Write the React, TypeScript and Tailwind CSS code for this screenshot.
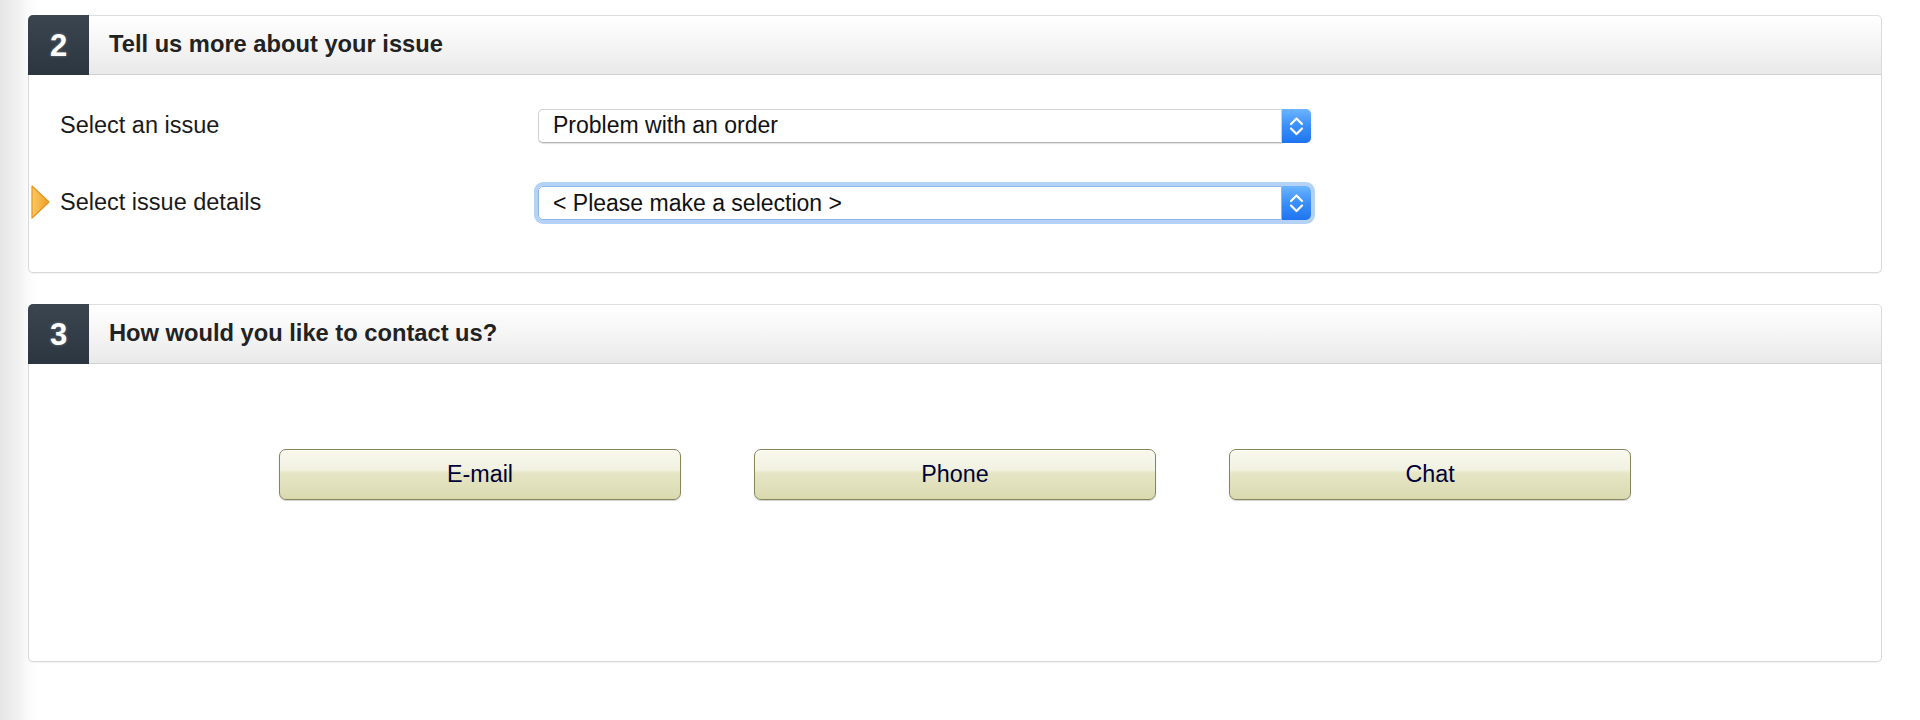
import React from "react";

function SelectBox({ text, focused }: { text: string; focused?: boolean }) {
  return (
    <div
      className={
        "flex h-[34px] w-[773px] rounded-[5px] " +
        (focused ? "shadow-[0_0_0_4px_#b3d2f6]" : "")
      }
    >
      <div
        className={
          "flex flex-1 items-center rounded-l-[5px] border bg-white pl-[14px] text-[23px] text-[#111] " +
          (focused
            ? "border-[#8fb6e8]"
            : "border-[#d2d2d2] border-b-[#b4b4b4] shadow-[0_1px_1px_rgba(0,0,0,0.12)]")
        }
        style={{ fontFamily: '"Liberation Sans", Arial, sans-serif' }}
      >
        {text}
      </div>
      <div className="flex w-[29px] items-center justify-center rounded-r-[5px] bg-[linear-gradient(to_bottom,#6cb4ff,#3a8ffc_50%,#1e74f0)]">
        <svg width="29" height="34" viewBox="0 0 29 34" fill="none">
          <polyline points="9,15 14.5,9.5 20,15" stroke="white" strokeWidth="2.2" strokeLinecap="round" strokeLinejoin="round" />
          <polyline points="9,19.5 14.5,25 20,19.5" stroke="white" strokeWidth="2.2" strokeLinecap="round" strokeLinejoin="round" />
        </svg>
      </div>
    </div>
  );
}

function PanelHeader({ num, title }: { num: string; title: string }) {
  return (
    <div className="flex h-[60px]">
      <div className="flex w-[61px] items-center justify-center rounded-tl-[5px] bg-[linear-gradient(to_bottom,#3a4550,#2c3640)]">
        <span className="text-[31px] font-bold leading-none text-white [text-shadow:0_0_3px_rgba(255,255,255,0.35)]">
          {num}
        </span>
      </div>
      <div className="flex flex-1 items-center rounded-tr-[5px] border-t border-r border-b border-t-[#dedede] border-r-[#dadada] border-b-[#d2d2d2] bg-[linear-gradient(to_bottom,#ffffff,#f6f6f6_45%,#e9e9e9)] pl-[20px]">
        <span className="text-[23.7px] font-bold text-[#222]">{title}</span>
      </div>
    </div>
  );
}

function ContactButton({ label }: { label: string }) {
  return (
    <div className="flex h-[51px] w-[402px] items-center justify-center rounded-[7px] border border-[#86865a] bg-[linear-gradient(to_bottom,#f8f8ee,#f2f2e2_40%,#e6e6c6_47%,#d9d9b0)] text-[23.3px] text-[#000038] shadow-[inset_0_1px_0_#ffffff,0_1px_1px_rgba(0,0,0,0.18)]">
      {label}
    </div>
  );
}

export default function App() {
  return (
    <div
      className="min-h-[720px] w-full bg-[linear-gradient(to_right,#e6e6e6,#f2f2f2_20px,#fbfbfb_28px,#ffffff_40px)] pt-[15px] pr-[38px] pl-[28px]"
      style={{ fontFamily: '"Liberation Sans", Arial, Helvetica, sans-serif' }}
    >
      <div className="flex flex-col gap-[31px]">
        {/* Panel 2 */}
        <div>
          <PanelHeader num="2" title="Tell us more about your issue" />
          <div className="flex h-[198px] flex-col gap-[42px] rounded-b-[5px] border-r border-b border-l border-[#d9d9d9] bg-white pt-[33px] pl-[31px] shadow-[0_1px_1px_rgba(0,0,0,0.05)]">
            <div className="flex items-center">
              <div className="w-[478px] text-[23.5px] text-[#1a1a1a]">Select an issue</div>
              <SelectBox text="Problem with an order" />
            </div>
            <div className="relative flex items-center">
              <svg
                className="absolute top-[0px] left-[-29px]"
                width="19"
                height="34"
                viewBox="0 0 19 34"
              >
                <defs>
                  <linearGradient id="arr" x1="0" y1="0" x2="1" y2="0">
                    <stop offset="0" stopColor="#fac964" />
                    <stop offset="1" stopColor="#ee9d22" />
                  </linearGradient>
                </defs>
                <polygon points="1,1 18,17 1,33" fill="url(#arr)" stroke="#e59420" strokeWidth="1.2" strokeLinejoin="round" />
              </svg>
              <div className="w-[478px] text-[23.5px] text-[#1a1a1a]">Select issue details</div>
              <SelectBox text="< Please make a selection >" focused />
            </div>
          </div>
        </div>

        {/* Panel 3 */}
        <div>
          <PanelHeader num="3" title="How would you like to contact us?" />
          <div className="flex h-[298px] justify-center gap-[73px] rounded-b-[5px] border-r border-b border-l border-[#d9d9d9] bg-white pt-[85px] shadow-[0_1px_1px_rgba(0,0,0,0.05)]">
            <ContactButton label="E-mail" />
            <ContactButton label="Phone" />
            <ContactButton label="Chat" />
          </div>
        </div>
      </div>
    </div>
  );
}
